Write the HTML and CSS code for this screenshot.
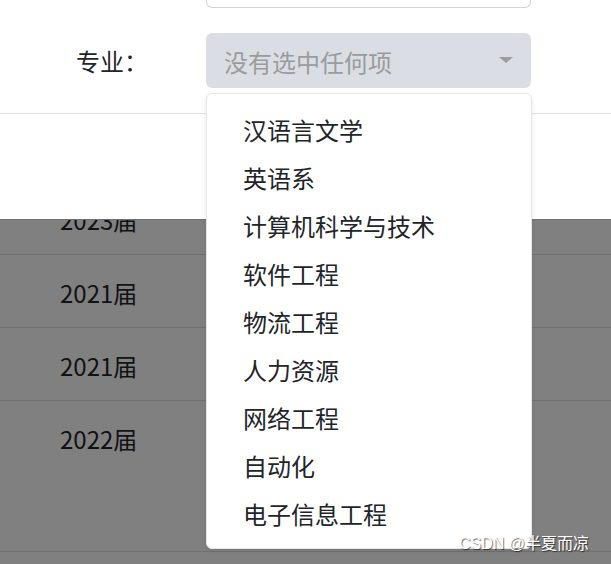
FILE: index.html
```html
<!DOCTYPE html>
<html lang="zh">
<head>
<meta charset="utf-8">
<title>专业选择</title>
<link rel="stylesheet" href="styles.css">
</head>
<body>
<div class="page">
  <div class="modal">
    <div class="modal-body">
      <div class="form-row">
        <div class="label-cell"></div>
        <div class="input-stub"></div>
      </div>
      <div class="form-row select-row">
        <label class="label-cell">专业：</label>
        <div class="select-box">
          <span class="placeholder">没有选中任何项</span>
          <span class="caret"></span>
        </div>
      </div>
    </div>
    <div class="modal-footer"></div>
  </div>
  <div class="table-wrap">
    <div class="table">
      <div class="row"><span class="cell">2023届</span></div>
      <div class="row"><span class="cell">2021届</span></div>
      <div class="row"><span class="cell">2021届</span></div>
      <div class="row tall"><span class="cell">2022届</span></div>
    </div>
  </div>

  <ul class="dropdown">
    <li>汉语言文学</li>
    <li>英语系</li>
    <li>计算机科学与技术</li>
    <li>软件工程</li>
    <li>物流工程</li>
    <li>人力资源</li>
    <li>网络工程</li>
    <li>自动化</li>
    <li>电子信息工程</li>
  </ul>

  <div class="watermark">CSDN @半夏而凉</div>
</div>
</body>
</html>
```

FILE: styles.css
```css
* { box-sizing: border-box; }
html, body {
  margin: 0;
  padding: 0;
  width: 611px;
  height: 564px;
  overflow: hidden;
  background: #808080;
}
.page {
  position: relative;
  width: 611px;
  height: 564px;
  font-family: "Noto Sans CJK SC", "Noto Sans", sans-serif;
  font-size: 24px;
  color: #212529;
}
.modal {
  background: #fff;
  height: 219px;
  display: flex;
  flex-direction: column;
}
.modal-body {
  height: 114px;
  border-bottom: 1px solid #e0e2e7;
  display: flex;
  flex-direction: column;
  gap: 25px;
}
.form-row {
  display: grid;
  grid-template-columns: 206px 325px;
}
.input-stub {
  height: 8px;
  border: 1px solid #ced4da;
  border-top: none;
  border-radius: 0 0 6px 6px;
}
.select-row {
  align-items: center;
}
.label-cell {
  padding-left: 76px;
  line-height: 36px;
  color: #212529;
}
.select-box {
  height: 55px;
  background: #dadee4;
  border-radius: 6px;
  display: flex;
  align-items: center;
  justify-content: space-between;
  padding: 0 18px 0 18px;
}
.placeholder {
  color: #9a9b9d;
  line-height: 36px;
  padding-top: 2px;
}
.caret {
  width: 0;
  height: 0;
  border-left: 7px solid transparent;
  border-right: 7px solid transparent;
  border-top: 6px solid #9a9b9d;
  margin-top: -2px;
}
.modal-footer {
  flex: 1;
}
.table-wrap {
  height: 345px;
  overflow: hidden;
  border-top: 1px solid #707070;
}
.table {
  margin-top: -38px;
}
.row {
  height: 73px;
  border-bottom: 1px solid #707173;
  padding: 20px 0 0 60px;
}
.row.tall {
  height: 151px;
}
.cell {
  display: block;
  line-height: 36px;
  color: #111214;
}
.dropdown {
  position: absolute;
  left: 206px;
  top: 93px;
  width: 326px;
  margin: 0;
  padding: 12px 0 10px;
  list-style: none;
  background: #fff;
  border: 1px solid #e6e6e6;
  border-radius: 6px;
  box-shadow: 0 2px 6px rgba(0,0,0,0.08);
}
.dropdown li {
  height: 48px;
  line-height: 36px;
  padding: 6px 36px;
  color: #212529;
}
.watermark {
  position: absolute;
  left: 459px;
  top: 534px;
  font-family: "Liberation Sans", "Noto Sans CJK SC", sans-serif;
  font-size: 16px;
  line-height: 20px;
  color: #ffffff;
  text-shadow: 1px 1px 1px rgba(0,0,0,0.6);
  white-space: nowrap;
}
```
